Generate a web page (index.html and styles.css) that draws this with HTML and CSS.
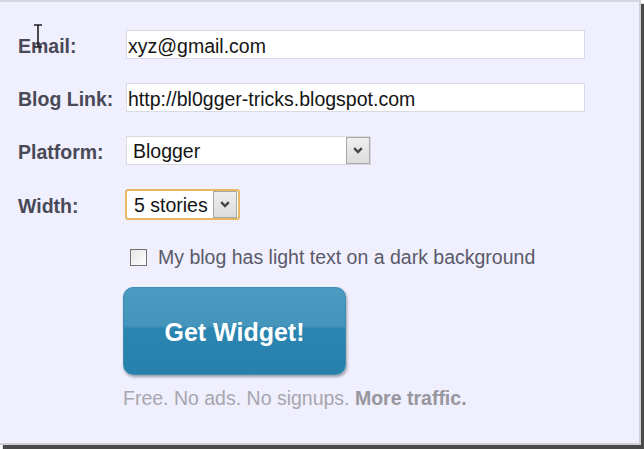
FILE: index.html
```html
<!DOCTYPE html>
<html>
<head>
<meta charset="utf-8">
<link rel="stylesheet" href="styles.css">
</head>
<body>
<div class="panel">
  <svg class="cursor" width="10" height="24" viewBox="0 0 10 24">
    <path d="M1 1 H9 M5 1 V23 M1 23 H9" stroke="#222" stroke-width="1.6" fill="none"/>
  </svg>
  <div class="form">
    <div class="label">Email:</div>
    <div class="field input wide">xyz@gmail.com</div>
    <div class="label">Blog Link:</div>
    <div class="field input wide">http://bl0gger-tricks.blogspot.com</div>
    <div class="label">Platform:</div>
    <div class="field select platform">
      <span class="select-text">Blogger</span>
      <span class="select-btn"><svg width="10" height="7" viewBox="0 0 10 7"><path d="M1.2 1.2 L5 5 L8.8 1.2" stroke="#444" stroke-width="2.4" fill="none"/></svg></span>
    </div>
    <div class="label">Width:</div>
    <div class="field select stories">
      <span class="select-text">5 stories</span>
      <span class="select-btn"><svg width="10" height="7" viewBox="0 0 10 7"><path d="M1.2 1.2 L5 5 L8.8 1.2" stroke="#444" stroke-width="2.4" fill="none"/></svg></span>
    </div>
  </div>
  <div class="check-row">
    <span class="checkbox"></span>
    <span class="check-label">My blog has light text on a dark background</span>
  </div>
  <div class="button">Get Widget!</div>
  <p class="note">Free. No ads. No signups. <b>More traffic.</b></p>
</div>
</body>
</html>
```
FILE: styles.css
```css
html, body {
  margin: 0;
  padding: 0;
  background: #ffffff;
}
body {
  width: 644px;
  height: 449px;
  overflow: hidden;
  font-family: "Liberation Sans", Arial, sans-serif;
}
.panel {
  position: relative;
  box-sizing: border-box;
  width: 641px;
  height: 445px;
  background: #efeffd;
  border-top: 2px solid #d6d6de;
  border-right: 2px solid #d0d0d8;
  border-bottom: 2px solid #d0d0d8;
  box-shadow: 3px 4px 1px #4a4a4a;
  padding: 28px 0 0 18px;
}
.cursor {
  position: absolute;
  left: 33px;
  top: 22px;
}
.form {
  display: grid;
  grid-template-columns: 108px auto;
  row-gap: 24px;
  align-items: center;
  justify-items: start;
}
.label {
  font-size: 19.5px;
  font-weight: bold;
  color: #494958;
  line-height: 22px;
  padding-top: 2px;
}
.field {
  box-sizing: border-box;
  height: 29px;
  font-size: 19.5px;
  color: #141414;
  background: #ffffff;
}
.input {
  border: 1px solid #d9d9e1;
  padding: 4px 0 0 1px;
  white-space: nowrap;
}
.wide {
  width: 459px;
}
.select {
  display: flex;
  justify-content: space-between;
}
.select-text {
  padding: 3px 0 0 6px;
}
.platform {
  width: 245px;
  border: 1px solid #d9d9e1;
}
.stories {
  width: 115px;
  height: 31px;
  margin-left: -1px;
  border: 2px solid #e8b860;
  border-radius: 3px;
}
.stories .select-text {
  padding-left: 7px;
}
.select-btn {
  box-sizing: border-box;
  width: 24px;
  display: flex;
  align-items: center;
  justify-content: center;
  border: 1px solid #a8a8a8;
  background: linear-gradient(#eeeeee, #dcdcdc);
}
.stories .select-btn {
  margin-right: 1px;
}
.check-row {
  display: flex;
  align-items: center;
  margin: 26px 0 0 112px;
  line-height: 22px;
}
.checkbox {
  box-sizing: border-box;
  width: 17px;
  height: 17px;
  border: 1px solid #727272;
  background: linear-gradient(135deg, #e6e6e6, #ffffff);
  margin-right: 11px;
}
.check-label {
  font-size: 19.5px;
  color: #5a5a6a;
}
.button {
  box-sizing: border-box;
  width: 223px;
  height: 88px;
  margin: 19px 0 0 105px;
  border: 1px solid #3c8cb4;
  border-radius: 10px;
  background: linear-gradient(#4a9ac2 0%, #4594bc 44%, #2b85b1 47%, #2880ac 100%);
  box-shadow: 1px 2px 3px rgba(0, 0, 0, 0.35);
  color: #ffffff;
  font-size: 25px;
  font-weight: bold;
  display: flex;
  align-items: center;
  justify-content: center;
  padding-top: 3px;
}
.note {
  margin: 12px 0 0 105px;
  font-size: 19.5px;
  line-height: 22px;
  color: #a8a6ae;
}
.note b {
  color: #98969e;
}
```
